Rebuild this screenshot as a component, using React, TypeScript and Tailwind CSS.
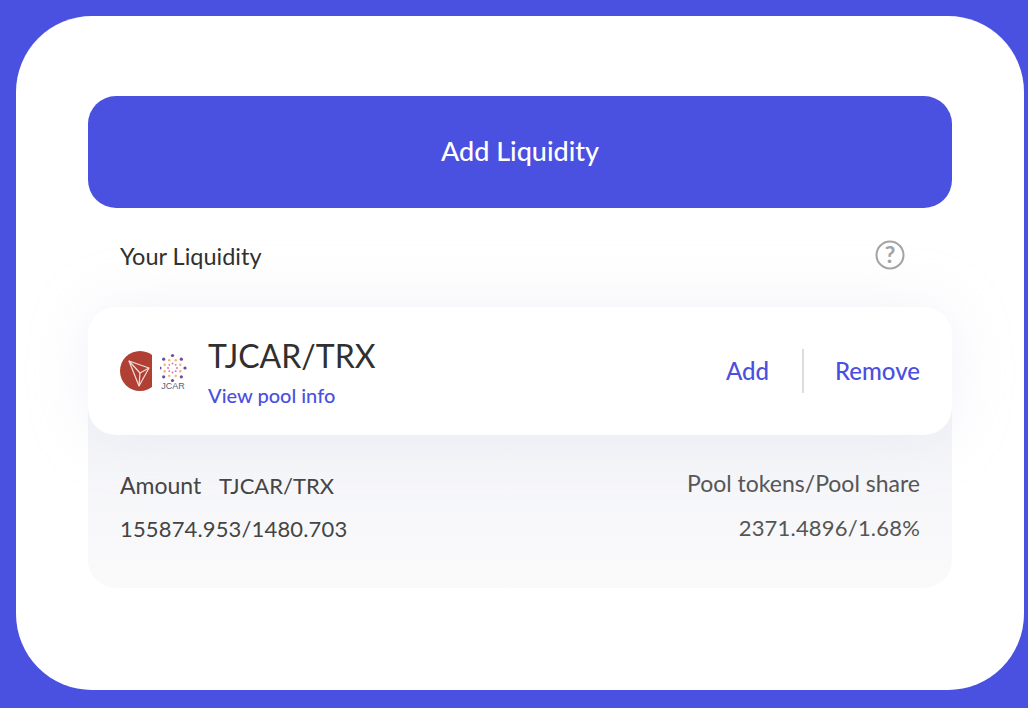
const font = { fontFamily: 'Lato, "Noto Sans", sans-serif' }

const TokenLogos = () => (
  <div className="flex items-center w-[88px] shrink-0">
    <svg width="32" height="40" viewBox="0 0 32 40" className="shrink-0">
      <circle cx="20" cy="20" r="20" fill="#b04034" />
      <g fill="none" stroke="#f3dfdc" strokeWidth="1.2" strokeLinejoin="round">
        <path d="M9 10 L29 17 L19 35 Z" />
        <path d="M9 10 L20 22 L29 17" />
        <path d="M20 22 L19 35" />
      </g>
    </svg>
    <svg width="28" height="40" viewBox="0 0 28 40" className="ml-[8px] shrink-0">
      {[0, 45, 90, 135, 180, 225, 270, 315].map(a => {
        const r = (a * Math.PI) / 180
        return (
          <g key={a}>
            <circle cx={12.5 + Math.cos(r) * 12.5} cy={17 + Math.sin(r) * 12.5} r="1.6" fill="#6f4a9c" />
            <circle cx={12.5 + Math.cos(r + 0.39) * 8.5} cy={17 + Math.sin(r + 0.39) * 8.5} r="1.2" fill="#f3b463" />
            <circle cx={12.5 + Math.cos(r) * 4.5} cy={17 + Math.sin(r) * 4.5} r="0.9" fill="#e867a4" />
          </g>
        )
      })}
      <text x="13" y="38" textAnchor="middle" fontSize="9" fill="#54647a" fontFamily="Liberation Sans, sans-serif">
        JCAR
      </text>
    </svg>
  </div>
)

export default function App() {
  return (
    <div className="min-h-screen bg-[#4a50df] pt-4 pl-4 pr-1 pb-[18px]" style={font}>
      <div className="h-[674px] bg-white rounded-[76px] px-[72px] pt-20">
        <button className="w-full h-[112px] pb-[2px] rounded-[28px] bg-[#4a50df] text-white text-[27px] font-medium">
          Add Liquidity
        </button>

        <div className="flex items-center justify-between h-[96px] pl-8 pr-[47px] pb-[2px]">
          <span className="text-[23.5px] leading-[32px] pt-[1px] text-[#2f2f2f]">Your Liquidity</span>
          <svg width="30" height="30" viewBox="0 0 30 30">
            <circle cx="15" cy="15" r="13.5" fill="none" stroke="#a3a3a3" strokeWidth="2" />
            <text x="15" y="23" textAnchor="middle" fontSize="23" fontWeight="700" fill="#a3a3a3" fontFamily="Lato, sans-serif">
              ?
            </text>
          </svg>
        </div>

        <div className="mt-[3px]">
          <div className="relative z-10 flex items-center h-[128px] bg-white rounded-[28px] px-8 shadow-[0_0_60px_rgba(205,208,230,0.28)]">
            <TokenLogos />
            <div className="flex flex-col">
              <span className="text-[32px] leading-[40px] text-[#303030]">TJCAR/TRX</span>
              <span className="mt-[7px] text-[20px] leading-[24px] font-medium text-[#4a50df]">View pool info</span>
            </div>
            <div className="ml-auto flex items-center text-[24px] font-medium text-[#4a50df]">
              <span>Add</span>
              <span className="w-[2px] h-[44px] bg-[#dcdcdc] ml-[33px] mr-[31px]" />
              <span>Remove</span>
            </div>
          </div>
          <div className="-mt-7 flex justify-between h-[181px] rounded-b-[28px] bg-gradient-to-b from-[#f3f4f8] to-[#fafafb] px-8 pt-[62px] text-[23px] leading-[32px] text-[#555555]">
            <div className="flex flex-col gap-[11px] text-[#444444]">
              <span>
                Amount&nbsp;&nbsp; <span className="text-[22px]">TJCAR/TRX</span>
              </span>
              <span className="text-[22px] tracking-[0.15px]">155874.953/1480.703</span>
            </div>
            <div className="flex flex-col gap-[13px] items-end -mt-[2px]">
              <span>Pool tokens/Pool share</span>
              <span className="text-[22px] tracking-[0.2px]">2371.4896/1.68%</span>
            </div>
          </div>
        </div>
      </div>
    </div>
  )
}
